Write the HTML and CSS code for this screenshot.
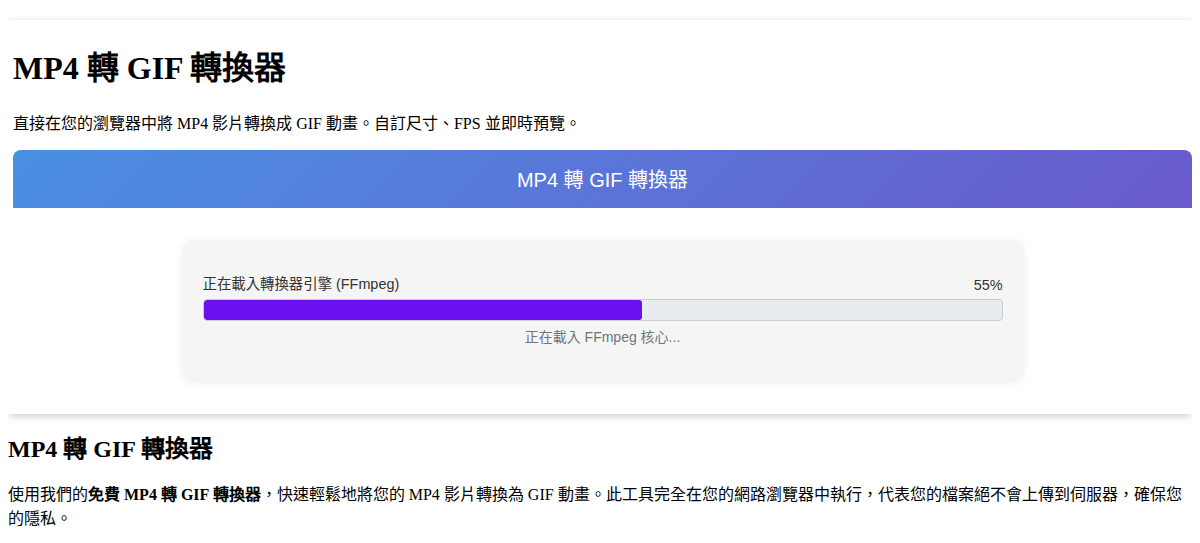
FILE: index.html
```html
<!DOCTYPE html>
<html lang="zh-TW">
<head>
    <meta charset="UTF-8">
    <meta name="viewport" content="width=device-width, initial-scale=1.0">
    <title>MP4 轉 GIF 轉換器</title>
    <link rel="stylesheet" href="styles.css">
</head>
<body>
    <div class="tool-wrapper">
        <h1>MP4 轉 GIF 轉換器</h1>
        <p>直接在您的瀏覽器中將 MP4 影片轉換成 GIF 動畫。自訂尺寸、FPS 並即時預覽。</p>

        <div class="converter">
            <div class="converter-header">MP4 轉 GIF 轉換器</div>
            <div class="converter-body">
                <div class="loading-card">
                    <div class="loading-top">
                        <span class="loading-label">正在載入轉換器引擎 (FFmpeg)</span>
                        <span class="loading-percent">55%</span>
                    </div>
                    <div class="progress">
                        <div class="progress-fill" style="width: 55%"></div>
                    </div>
                    <div class="loading-status">正在載入 FFmpeg 核心...</div>
                </div>
            </div>
        </div>
    </div>

    <h2>MP4 轉 GIF 轉換器</h2>
    <p>使用我們的<strong>免費 MP4 轉 GIF 轉換器</strong>，快速輕鬆地將您的 MP4 影片轉換為 GIF 動畫。此工具完全在您的網路瀏覽器中執行，代表您的檔案絕不會上傳到伺服器，確保您的隱私。</p>
</body>
</html>
```

FILE: styles.css
```css
body {
    margin: 8px;
    font-family: "Liberation Serif", serif;
    color: #000;
    background: #fff;
}

.tool-wrapper {
    margin-top: 12px;
    padding: 1px 0 1px 5px;
    background: #fff;
    box-shadow: 0 2px 8px rgba(0, 0, 0, 0.2);
}

.tool-wrapper h1 {
    margin: 21px 0 22px;
}

.converter {
    margin-top: 16px;
}

.converter-header {
    background: linear-gradient(135deg, #4a90e2, #6a5acd);
    color: #fff;
    text-align: center;
    font-family: "Liberation Sans", "Noto Sans CJK TC", sans-serif;
    font-size: 20px;
    padding: 14px 0 15px;
    border-radius: 8px 8px 0 0;
}

.converter-body {
    padding: 32px 0 33px;
}

.loading-card {
    max-width: 800px;
    margin: 0 auto;
    padding: 32px 20px 34px;
    background: #f5f5f5;
    border-radius: 10px;
    box-shadow: 0 2px 8px rgba(0, 0, 0, 0.08);
    font-family: "Liberation Sans", "Noto Sans CJK TC", sans-serif;
}

.loading-top {
    display: flex;
    justify-content: space-between;
    align-items: flex-end;
    font-size: 14.4px;
    color: #333;
    margin-bottom: 6px;
}

.progress {
    height: 20px;
    background: #e9ecef;
    border: 1px solid #ccc;
    border-radius: 4px;
    overflow: hidden;
}

.progress-fill {
    height: 100%;
    background: #6a11f0;
    border-radius: 3px;
}

.loading-status {
    text-align: center;
    font-size: 14px;
    color: #6c757d;
    margin-top: 5px;
}

h2 {
    margin: 15px 0 17px;
}
```
